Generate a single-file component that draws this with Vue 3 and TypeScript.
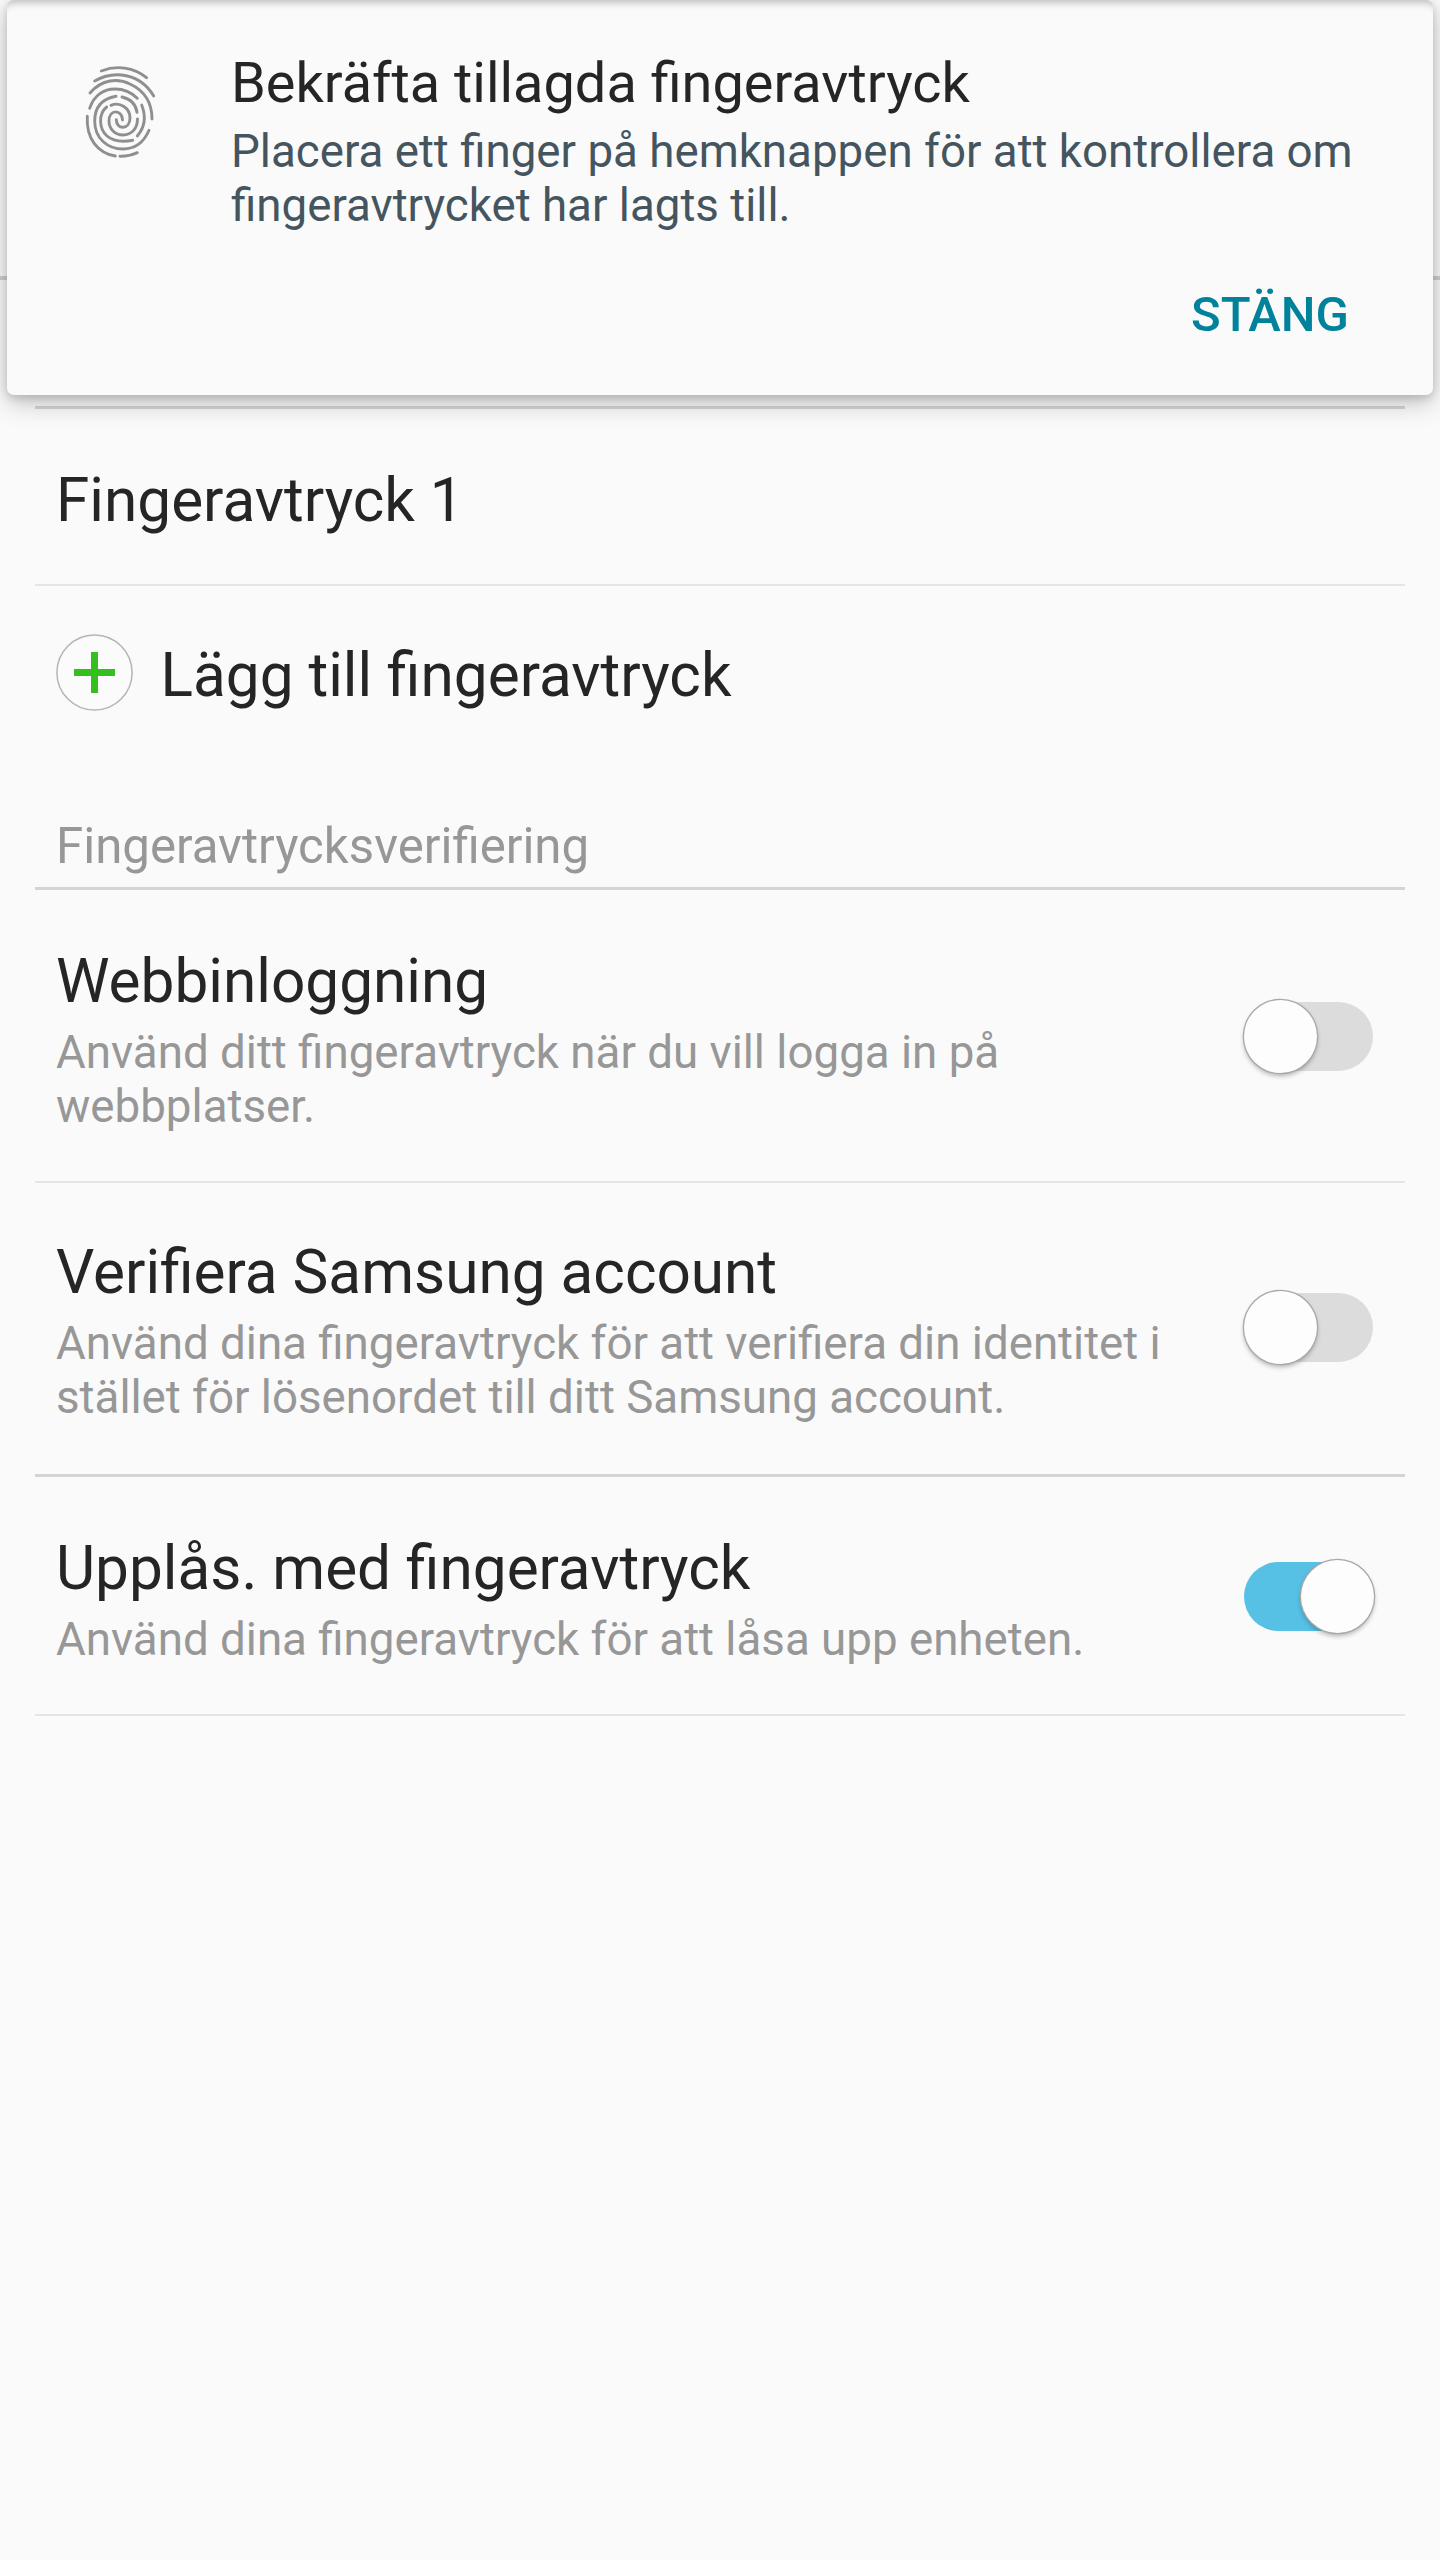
<script setup lang="ts">
interface Setting { id: string; title: string; lines: string[]; on: boolean }
const settings: Setting[] = [
  { id: 'web', title: 'Webbinloggning', lines: ['Använd ditt fingeravtryck när du vill logga in på', 'webbplatser.'], on: false },
  { id: 'account', title: 'Verifiera Samsung account', lines: ['Använd dina fingeravtryck för att verifiera din identitet i', 'stället för lösenordet till ditt Samsung account.'], on: false },
  { id: 'unlock', title: 'Upplås. med fingeravtryck', lines: ['Använd dina fingeravtryck för att låsa upp enheten.'], on: true },
]
</script>

<template>
  <main class="screen">
    <div class="backdrop"></div>
    <section class="content">
      <div class="row finger"><span class="title">Fingeravtryck 1</span></div>
      <div class="row add">
        <svg class="plus" viewBox="0 0 78 78"><circle cx="38.5" cy="38.5" r="37.6" fill="#fbfbfb" stroke="#b5b5b5" stroke-width="1.5" /><path d="M38.5 18V59M18 38.5H59" stroke="#34bf1f" stroke-width="7" /></svg>
        <span class="title">Lägg till fingeravtryck</span>
      </div>
      <h2 class="group">Fingeravtrycksverifiering</h2>
      <div v-for="s in settings" :key="s.id" class="row setting" :class="s.id">
        <div class="texts">
          <div class="title">{{ s.title }}</div>
          <div v-for="l in s.lines" :key="l" class="desc">{{ l }}</div>
        </div>
        <div class="switch" :class="{ on: s.on }"><span class="knob"></span></div>
      </div>
    </section>
    <aside class="dialog">
      <svg class="print" viewBox="0 0 100 120" fill="none" stroke="#8f8f8f" stroke-width="2.9" stroke-linecap="round">
        <path d="M31.3 21C46 15 64 17 76.5 27.7" />
        <path d="M24.7 31C44 20 70 23 83.7 46" />
        <path d="M20 43C32 29 48 28 60 34C75 41 82 54 82 69" />
        <path d="M19.7 58.3C24 45 34 39 45 39C54 39 61 42 67.3 48.3" />
        <path d="M46 46.3C31 49 24.7 58 24.7 71C24.7 89 38 99 53 99C65 99 74 92 79 80.3" />
        <path d="M52 47C61 49 66 55 67 62.3" />
        <path d="M36.7 57C28 64 29 79 37 86C44 92 53 92 62.7 90.3" />
        <path d="M41 55.3C50 51.5 60 58 60 68C60 80 46.3 80 46.3 69.7" />
        <path d="M52.5 70C52.5 59.5 39 58.5 39 71C39 79 45 85 53 85C62 85 67.5 78 67.5 69" />
        <path d="M71.7 55C76 66 75 77 67.3 86" />
        <path d="M17.3 66.3C16 89 28 103 45.3 106" />
        <path d="M50 106.3C56 106.5 62 105 67.3 102.7" />
      </svg>
      <div class="message">
        <h1>Bekräfta tillagda fingeravtryck</h1>
        <p>Placera ett finger på hemknappen för att kontrollera om<br />fingeravtrycket har lagts till.</p>
        <button type="button">STÄNG</button>
      </div>
    </aside>
  </main>
</template>

<style>
body { margin: 0; background: #fafafa; }
</style>

<style scoped>
.screen { position: relative; box-sizing: border-box; width: 1440px; height: 2560px; padding-top: 406px; overflow: hidden; background: #fafafa; font-family: Roboto, sans-serif; color: #252525; }
.backdrop { position: absolute; left: 0; top: 276px; width: 1440px; height: 4px; background: #cfcfcf; }
.content { display: flex; flex-direction: column; margin: 0 35px; border-top: 3px solid #d4d4d4; }
.row { box-sizing: border-box; display: flex; padding: 0 32px 0 21px; }
.title { font-size: 60.3px; line-height: 70px; white-space: nowrap; }
.finger { height: 177px; padding-top: 57px; border-bottom: 2px solid #e5e5e5; }
.add { height: 204px; padding-top: 48px; }
.add .title { margin: 7px 0 0 26.5px; }
.plus { flex: none; width: 78px; height: 78px; }
.group { box-sizing: border-box; height: 100px; margin: 0; padding: 28px 21px 0; border-bottom: 3px solid #d4d4d4; color: #979797; font-weight: 400; font-size: 49.2px; line-height: 57px; white-space: nowrap; }
.setting { justify-content: space-between; padding-top: 56px; }
.web { height: 293px; border-bottom: 2px solid #e5e5e5; }
.account { height: 294px; padding-top: 54px; border-bottom: 3px solid #d4d4d4; }
.unlock { height: 239px; border-bottom: 2px solid #e5e5e5; }
.texts { width: 1130px; padding-top: 1px; }
.texts .title { margin-bottom: 9px; }
.desc { color: #979797; font-size: 45.7px; line-height: 54px; white-space: nowrap; }
.switch { box-sizing: border-box; display: flex; flex: none; width: 129px; height: 69px; margin-top: 56px; border-radius: 35px; background: #dcdcdc; }
.unlock .switch { margin-top: 29px; }
.switch.on { justify-content: flex-end; background: #56c0e5; }
.knob { flex: none; width: 73px; height: 73px; margin: -2.5px 0 0; border-radius: 50%; background: #fdfdfd; box-shadow: 0 0 0 1.3px #a8a8a8, 0 3px 5px rgba(0,0,0,.3); }
.switch.on .knob { margin-right: -.5px; }
.dialog { position: absolute; box-sizing: border-box; left: 7px; top: 0; width: 1426px; height: 395px; display: flex; padding: 50px 84px 0 63px; border-radius: 7px; background: #fafafa; box-shadow: 0 8px 26px rgba(0,0,0,.22), 0 3px 10px rgba(0,0,0,.16), inset 0 11px 9px -9px rgba(0,0,0,.28); }
.print { flex: none; width: 100px; height: 120px; }
.message { display: flex; flex: 1; min-width: 0; flex-direction: column; margin-left: 61px; }
h1 { margin: 0; font-size: 55.9px; font-weight: 400; line-height: 66px; white-space: nowrap; }
p { margin: 9px 0 0; color: #455560; font-size: 45.7px; line-height: 54px; white-space: nowrap; }
button { align-self: flex-end; margin: 53px 0 0; padding: 0; border: 0; background: none; color: #00829b; font: 500 49px/58px Roboto, sans-serif; }
</style>
